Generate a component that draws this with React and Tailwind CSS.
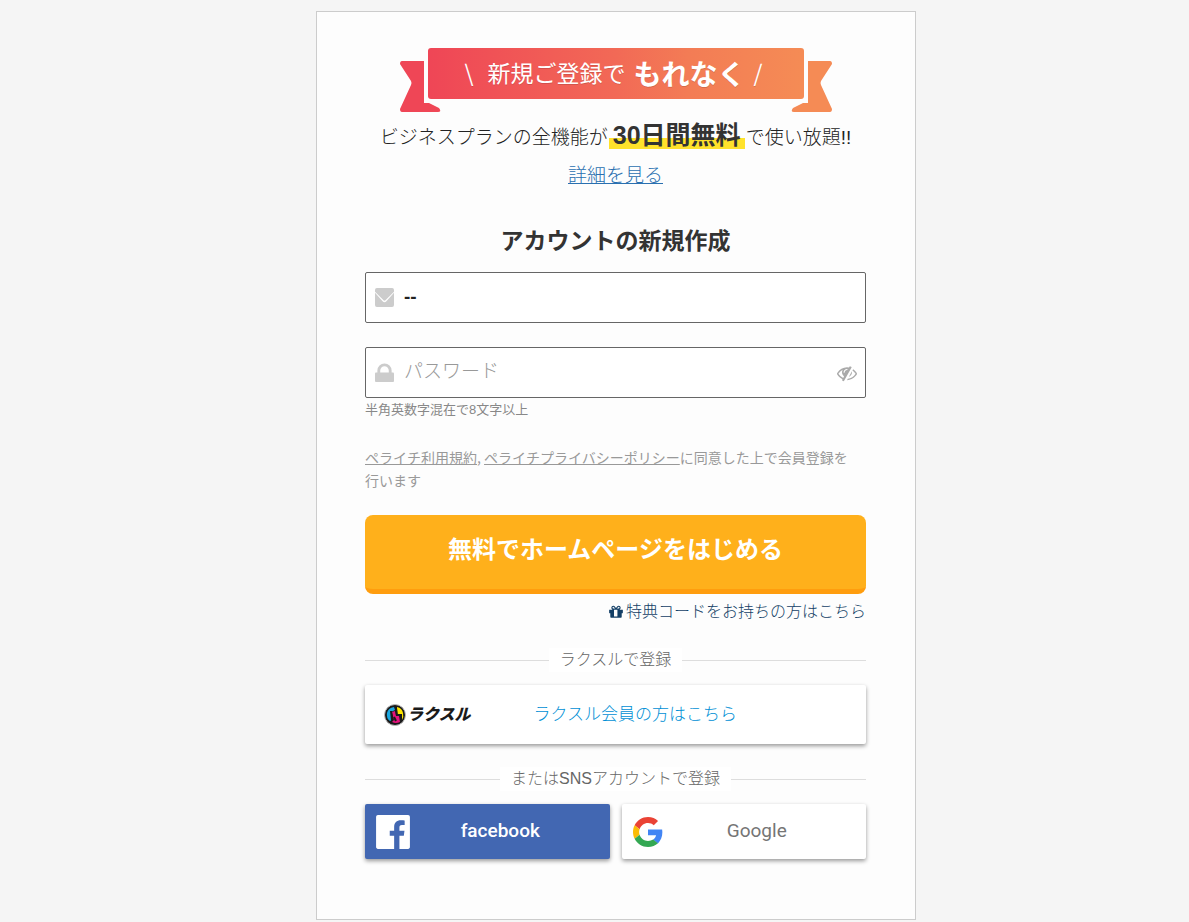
import React, { useState } from 'react';

const Ribbon = () => (
  <svg className="absolute inset-0 h-16 w-full" viewBox="0 0 432 64" aria-hidden="true">
    <defs>
      <linearGradient id="ribbon" gradientUnits="userSpaceOnUse" x1="30" y1="0" x2="400" y2="0">
        <stop offset="0" stopColor="#ef4656" />
        <stop offset="0.5" stopColor="#f26956" />
        <stop offset="0.7" stopColor="#f37c55" />
        <stop offset="1" stopColor="#f58b55" />
      </linearGradient>
    </defs>
    <g fill="url(#ribbon)">
      <rect x="28" y="0" width="376" height="51" rx="3" />
      <path d="M2 13H24V55H29L39 60Q42 64 38 64H2Q0 64 0 61L11 37Q12 35 11 33L0 16Q0 13 2 13Z" />
      <path d="M430 13H408V55H403L393 60Q390 64 394 64H430Q432 64 432 61L421 37Q420 35 421 33L432 16Q432 13 430 13Z" />
    </g>
  </svg>
);

const MailIcon = () => (
  <svg className="h-[19px] w-[19px]" viewBox="0 0 20 20" aria-hidden="true">
    <path fill="#ccc" d="M2 0H18Q20 0 20 2V4L11 13Q10 14 9 13L0 4V2Q0 0 2 0Z" />
    <path fill="#ccc" d="M0 5L8 14Q10 16 12 14L20 5V18Q20 20 18 20H2Q0 20 0 18Z" />
  </svg>
);

const LockIcon = () => (
  <svg className="h-[19px] w-[19px]" viewBox="0 0 20 20" aria-hidden="true">
    <path fill="none" stroke="#ccc" strokeWidth="3" d="M4 11V8A6 6 0 0 1 16 8V11" />
    <rect fill="#ccc" x="0" y="10" width="20" height="10" rx="1" />
  </svg>
);

const EyeSlashIcon = () => (
  <svg className="h-5 w-5" viewBox="0 0 1792 1792" fill="currentColor" aria-hidden="true">
    <path d="M555 1335l78-141q-87-63-136-159t-49-203q0-121 61-225-229 117-381 353 167 258 427 375zm389-759q0-20-14-34t-34-14q-125 0-214.5 89.5t-89.5 214.5q0 20 14 34t34 14 34-14 14-34q0-86 61-147t147-61q20 0 34-14t14-34zm363-191q0 7-1 9-106 189-316 567t-315 566l-49 89q-10 16-28 16-12 0-134-70-16-10-16-28 0-12 44-87-143-65-263.5-173t-208.5-245q-20-31-20-69t20-69q153-235 380-371t496-136q89 0 180 17l54-97q10-16 28-16 5 0 18 6t31 15.5 33 18.5 31.5 18.5 19.5 11.5q16 10 16 27zm37 447q0 139-79 253.5t-209 164.5l280-502q8 45 8 84zm448 128q0 35-20 69-39 64-109 145-150 172-347.5 267t-419.5 95l74-132q212-18 392.5-137t301.5-307q-115-179-282-294l63-112q95 64 182.5 153t144.5 182q20 34 20 69z" />
  </svg>
);

const GiftIcon = () => (
  <svg className="h-4 w-4" viewBox="0 0 1792 1792" fill="currentColor" aria-hidden="true">
    <path d="M1056 1356v-716h-384v716q0 25 18 38.5t46 13.5h256q28 0 46-13.5t18-38.5zm-456-844h195l-126-161q-26-31-69-31-40 0-68 28t-28 68 28 68 68 28zm688-96q0-40-28-68t-68-28q-43 0-69 31l-125 161h194q40 0 68-28t28-68zm376 256v320q0 14-9 23t-23 9h-96v416q0 40-28 68t-68 28h-1088q-40 0-68-28t-28-68v-416h-96q-14 0-23-9t-9-23v-320q0-14 9-23t23-9h440q-93 0-158.5-65.5t-65.5-158.5 65.5-158.5 158.5-65.5q107 0 168 77l128 165 128-165q61-77 168-77 93 0 158.5 65.5t65.5 158.5-65.5 158.5-158.5 65.5h440q14 0 23 9t9 23z" />
  </svg>
);

const RaksulMark = () => (
  <svg className="h-6 w-6" viewBox="0 0 24 24" aria-hidden="true">
    <circle cx="12" cy="12" r="10.5" fill="#1a1a1a" stroke="#bbb" strokeWidth="1" />
    <path fill="#1ba7e0" d="M4 10Q5 5 11 4L12 7L8 9L9 17L7 18Q3 15 4 10Z" />
    <path fill="#e5127d" d="M9 9L12 8L13 13L16 13L17 19Q13 21 9 19L11 17Z" />
    <path fill="#ffe600" d="M14 4Q19 5 20 10Q21 14 19 17L17 11L14 11Z" />
    <path fill="none" stroke="#1a1a1a" strokeWidth="2" d="M8 8L9 18M13 5L14 12H18L18 18M11 14L13 18" />
  </svg>
);

const FacebookIcon = () => (
  <svg className="h-[34px] w-[34px]" viewBox="4 4 259 259" aria-hidden="true">
    <path fill="#fff" d="M248.082,262.307c7.854,0,14.223-6.369,14.223-14.225V18.812c0-7.857-6.368-14.224-14.223-14.224H18.812c-7.857,0-14.224,6.367-14.224,14.224v229.27c0,7.855,6.366,14.225,14.224,14.225H248.082z" />
    <path fill="#4267b2" d="M182.409,262.307v-99.803h33.499l5.016-38.895h-38.515V98.777c0-11.261,3.127-18.935,19.275-18.935l20.596-0.009V45.045c-3.562-0.474-15.788-1.533-30.012-1.533c-29.695,0-50.025,18.126-50.025,51.413v28.684h-33.585v38.895h33.585v99.803H182.409z" />
  </svg>
);

const GoogleIcon = () => (
  <svg className="h-[30px] w-[30px]" viewBox="0 0 48 48" aria-hidden="true">
    <path fill="#EA4335" d="M24 9.5c3.54 0 6.71 1.22 9.21 3.6l6.85-6.85C35.9 2.38 30.47 0 24 0 14.62 0 6.51 5.38 2.56 13.22l7.98 6.19C12.43 13.72 17.74 9.5 24 9.5z" />
    <path fill="#4285F4" d="M46.98 24.55c0-1.57-.15-3.09-.38-4.55H24v9.02h12.94c-.58 2.96-2.26 5.48-4.78 7.18l7.73 6c4.51-4.18 7.09-10.36 7.09-17.65z" />
    <path fill="#FBBC05" d="M10.53 28.59c-.48-1.45-.76-2.99-.76-4.59s.27-3.14.76-4.59l-7.98-6.19C.92 16.46 0 20.12 0 24c0 3.88.92 7.54 2.56 10.78l7.97-6.19z" />
    <path fill="#34A853" d="M24 48c6.48 0 11.93-2.13 15.89-5.81l-7.73-6c-2.15 1.45-4.92 2.3-8.16 2.3-6.26 0-11.57-4.22-13.47-9.91l-7.98 6.19C6.51 42.62 14.62 48 24 48z" />
  </svg>
);

const Divider = ({ children }) => (
  <div className="flex h-6 items-center text-base leading-6 text-[#666]">
    <span className="h-px flex-1 bg-[#ddd]" />
    <span className="bg-white px-[11px]">{children}</span>
    <span className="h-px flex-1 bg-[#ddd]" />
  </div>
);

const App = () => {
  const [email, setEmail] = useState('--');
  const [password, setPassword] = useState('');
  const [visible, setVisible] = useState(false);

  return (
    <div className="min-h-screen bg-[#f5f5f5] pt-[11px] pl-[43px] font-['Liberation_Sans','Noto_Sans_CJK_JP',sans-serif] font-light text-[#222]">
      <main className="mx-auto max-w-[600px] border border-[#ccc] bg-[#fdfdfd] pt-9 pr-[49px] pb-[60px] pl-12">
        <div className="relative mx-auto h-16 max-w-[432px]">
          <Ribbon />
          <p className="relative flex h-[51px] items-center justify-center gap-2 pr-1 pb-[2px] font-['Noto_Sans_CJK_JP',sans-serif] text-[23px] font-normal text-white text-shadow-2xs">
            <span className="mr-[6px]">\</span>
            <span>新規ご登録で</span>
            <strong className="text-[28px] font-bold">もれなく</strong>
            <span>/</span>
          </p>
        </div>

        <p className="mt-[7px] text-center text-[19px] leading-[38px] whitespace-nowrap">
          ビジネスプランの全機能が
          <strong className="mx-px bg-linear-to-b from-transparent from-60% to-[#ffe22b] to-60% px-1 text-[25px] leading-none font-bold text-[#333]">
            30日間無料
          </strong>
          で使い放題!!
        </p>
        <p className="text-center text-[19px] leading-[38px]">
          <a href="#detail" className="text-[#2a70b0] underline">詳細を見る</a>
        </p>

        <h1 className="mt-[30px] mb-[15px] text-center text-[23px] leading-8 font-bold text-[#333]">
          アカウントの新規作成
        </h1>

        <form onSubmit={(e) => e.preventDefault()}>
          <label className="flex h-[51px] items-center gap-[10px] rounded-xs border border-[#666] bg-white px-[9px]">
            <MailIcon />
            <input
              className="min-w-0 flex-1 text-[19px] font-bold outline-none"
              type="text"
              name="email"
              aria-label="メールアドレス"
              value={email}
              onChange={(e) => setEmail(e.target.value)}
            />
          </label>
          <div className="mt-6 flex h-[51px] items-center gap-[10px] rounded-xs border border-[#666] bg-white pr-2 pl-[9px]">
            <LockIcon />
            <input
              className="min-w-0 flex-1 text-[19px] outline-none placeholder:text-[#999]"
              type={visible ? 'text' : 'password'}
              name="password"
              aria-label="パスワード"
              placeholder="パスワード"
              value={password}
              onChange={(e) => setPassword(e.target.value)}
            />
            <button
              type="button"
              className="text-[#aaa]"
              aria-label="パスワードを表示"
              onClick={() => setVisible(!visible)}
            >
              <EyeSlashIcon />
            </button>
          </div>
          <p className="text-[13px] leading-6 font-normal text-[#888]">半角英数字混在で8文字以上</p>

          <p className="mt-6 pr-2 font-['Noto_Sans_CJK_JP',sans-serif] text-sm leading-[23px] font-normal text-[#999]">
            <a href="#terms" className="underline">ペライチ利用規約</a>,{' '}
            <a href="#privacy" className="underline">ペライチプライバシーポリシー</a>
            に同意した上で会員登録を
            <wbr />
            行います
          </p>

          <button
            type="submit"
            className="mt-[23px] h-[79px] w-full rounded-lg border-b-[5px] border-[#ff9d0e] bg-[#ffb01b] pb-1 text-2xl font-bold text-white"
          >
            無料でホームページをはじめる
          </button>
        </form>

        <p className="mt-[6px] flex h-6 justify-end text-base leading-6 text-[#133f66]">
          <a href="#code" className="flex items-center gap-[2px]">
            <GiftIcon />
            特典コードをお持ちの方はこちら
          </a>
        </p>

        <div className="mt-6 mb-[13px]">
          <Divider>ラクスルで登録</Divider>
        </div>
        <button
          type="button"
          className="flex h-[59px] w-full items-center rounded-xs bg-white px-[18px] shadow-[0_2px_4px_rgba(0,0,0,0.4)]"
        >
          <RaksulMark />
          <span className="text-base font-black text-[#1a1a1a] italic">ラクスル</span>
          <span className="flex-1 pr-12 text-center text-[17px] text-[#008fd5]">
            ラクスル会員の方はこちら
          </span>
        </button>

        <div className="mt-[23px] mb-[13px]">
          <Divider>またはSNSアカウントで登録</Divider>
        </div>
        <div className="grid grid-cols-2 gap-3 font-['Roboto',sans-serif] text-[19px]">
          <button
            type="button"
            className="flex h-[55px] items-center rounded-xs bg-[#4267b2] px-[11px] font-medium text-white shadow-[0_2px_4px_rgba(0,0,0,0.4)]"
          >
            <FacebookIcon />
            <span className="flex-1 pr-2 text-center">facebook</span>
          </button>
          <button
            type="button"
            className="flex h-[55px] items-center rounded-xs bg-white px-[11px] font-normal text-[#757575] shadow-[0_2px_4px_rgba(0,0,0,0.4)]"
          >
            <GoogleIcon />
            <span className="flex-1 pr-1 text-center">Google</span>
          </button>
        </div>
      </main>
    </div>
  );
};

export default App;
